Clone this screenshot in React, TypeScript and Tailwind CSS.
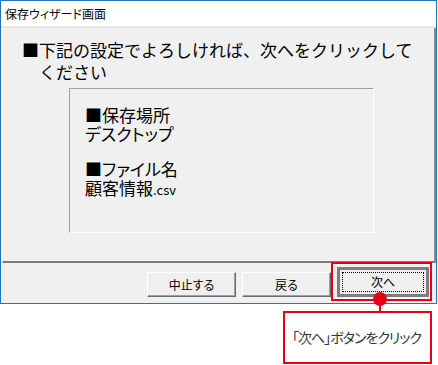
import React from 'react'

const jp = "font-['Noto_Sans_CJK_JP','Liberation_Sans',sans-serif]"
const red = 'border-[#e50013]'

function WinButton({ label }: { label: string }) {
  return (
    <div className="flex h-[25px] w-[89px] items-center justify-center border border-t-white border-l-white border-r-[#696969] border-b-[#696969] bg-[#efefef] text-[12px] text-black shadow-[inset_-1px_-1px_0_#a0a0a0]">
      {label}
    </div>
  )
}

function DefaultButton({ label }: { label: string }) {
  return (
    <div className="flex h-[30px] w-[92px] border-[3px] border-[#7d7d7d] bg-[#efefef] p-[2px]">
      <div className="flex flex-1 items-center justify-center border border-dotted border-black text-[12px] text-black">
        {label}
      </div>
    </div>
  )
}

export default function App() {
  return (
    <div className={`relative h-[365px] w-[438px] overflow-hidden bg-white ${jp} [font-feature-settings:'palt']`}>
      {/* Dialog window */}
      <div className="flex h-[304px] w-[437px] flex-col border border-[#1c74c6] bg-[#f0f0f0]">
        {/* Title bar */}
        <div className="flex h-[25px] items-center bg-white px-[4px] text-[12px] text-black">
          保存ウィザード画面
        </div>
        <div className="h-[2px] bg-[#e6e6e6]" />

        {/* Content panel */}
        <div className="ml-px flex h-[235px] flex-col border-l border-l-white border-r-2 border-r-[#8a8a8a] border-b-2 border-b-[#7a7a7a] pt-[11px]">
          <div className="ml-[19px] flex text-[17px] leading-[22px] text-black [font-feature-settings:normal]">
            <span>■</span>
            <div className="w-[376px]">下記の設定でよろしければ、次へをクリックしてください</div>
          </div>

          <div className="ml-[66px] mt-[5px] h-[145px] w-[305px] border border-t-[#a0a0a0] border-l-[#a0a0a0] border-r-white border-b-white pl-[15px] pt-[16px] text-[17px] leading-[19px] text-black">
            <div>■保存場所</div>
            <div>デスクトップ</div>
            <div className="h-[16px]" />
            <div>■ファイル名</div>
            <div>
              顧客情報<span className="text-[13px]">.csv</span>
            </div>
          </div>
        </div>

        {/* Button bar */}
        <div className="flex flex-1 items-end justify-end gap-[6px] pb-[6px] pr-[7px]">
          <WinButton label="中止する" />
          <WinButton label="戻る" />
          <DefaultButton label="次へ" />
        </div>
      </div>

      {/* Annotation */}
      <div className={`absolute left-[331px] top-[262px] h-[39px] w-[101px] border-2 ${red} shadow-[inset_0_0_0_1px_white]`} />
      <div className="absolute left-[379px] top-[300px] h-[12px] w-[2px] bg-[#e50013]" />
      <div className="absolute left-[373px] top-[292px] h-[14px] w-[14px] rounded-full bg-[#e50013]" />
      <div className={`absolute left-[283px] top-[311px] flex h-[53px] w-[149px] items-center whitespace-nowrap border-2 ${red} bg-white pl-[7px] text-[14px] tracking-[-1px] text-[#333333]`}>
        「次へ」ボタンをクリック
      </div>
    </div>
  )
}
